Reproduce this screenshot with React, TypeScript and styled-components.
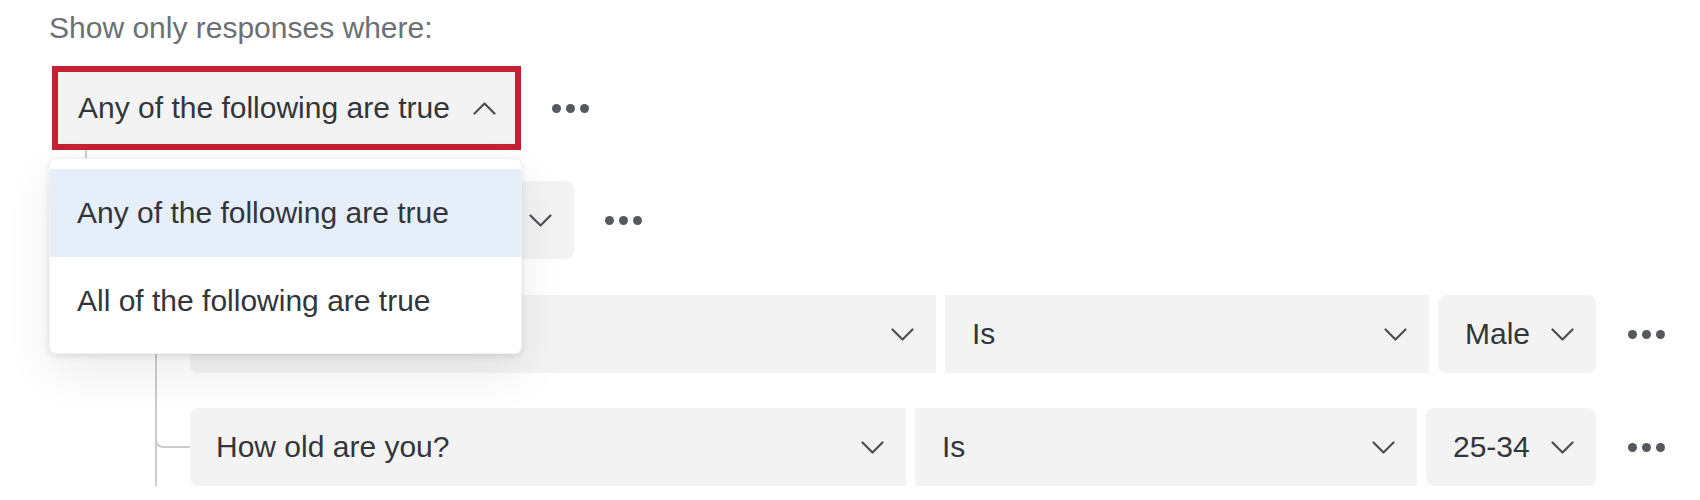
import React from "react";
import styled, { createGlobalStyle, css } from "styled-components";

const GlobalStyle = createGlobalStyle`
  html, body {
    margin: 0;
    padding: 0;
    background: #ffffff;
    overflow: hidden;
  }
  body {
    font-family: "Liberation Sans", Arial, sans-serif;
    color: #32363a;
  }
`;

const Page = styled.div`
  padding: 10px 0 0 52px;
  font-size: 30px;
`;

const Title = styled.div`
  margin-left: -3px;
  line-height: 36px;
  color: #6c6f73;
  margin-bottom: 20px;
`;

const Group = styled.div`
  position: relative;
  display: flex;
  flex-direction: column;
`;

const HeaderRow = styled.div`
  display: flex;
  align-items: center;
  gap: 31px;
`;

const Select = styled.div<{ $w?: number; $radius?: string; $active?: boolean }>`
  display: flex;
  align-items: center;
  justify-content: space-between;
  box-sizing: border-box;
  flex: none;
  height: 78px;
  width: ${(p) => (p.$w ? `${p.$w}px` : "auto")};
  padding: 0 22px 0 26px;
  background: #f3f3f3;
  border-radius: ${(p) => p.$radius ?? "8px"};
  color: #32363a;
  white-space: nowrap;
  overflow: hidden;
  ${(p) =>
    p.$active &&
    css`
      height: 84px;
      border: 6px solid #c42133;
      padding: 0 19px 0 20px;
    `}
`;

const ValueSelect = styled(Select)`
  justify-content: flex-start;
  gap: 21px;
  padding: 0 22px 0 27px;
`;

const Label = styled.span`
  line-height: 36px;
`;

const Dots = styled.div<{ $ml?: number }>`
  display: flex;
  gap: 5px;
  flex: none;
  margin-left: ${(p) => p.$ml ?? 0}px;
`;

const Dot = styled.span`
  width: 9px;
  height: 9px;
  border-radius: 50%;
  background: #55585d;
`;

const Children = styled.div<{
  $indent: number;
  $line: number;
  $padTop: number;
  $continues?: boolean;
}>`
  position: relative;
  display: flex;
  flex-direction: column;
  gap: 35px;
  padding: ${(p) => p.$padTop}px 0 0 ${(p) => p.$indent}px;
  ${(p) =>
    p.$continues &&
    css`
      &::before {
        content: "";
        position: absolute;
        left: ${p.$line}px;
        top: 0;
        bottom: -60px;
        border-left: 2px solid #cbcbcb;
      }
    `}
`;

const Branch = styled.div<{ $reach: number; $offset: number }>`
  position: relative;
  &::before {
    content: "";
    position: absolute;
    left: -${(p) => p.$offset}px;
    top: -${(p) => p.$reach}px;
    width: ${(p) => p.$offset}px;
    height: calc(${(p) => p.$reach}px + 50% + 1px);
    box-sizing: border-box;
    border-left: 2px solid #cbcbcb;
    border-bottom: 2px solid #cbcbcb;
    border-bottom-left-radius: 8px;
  }
`;

const ConditionRow = styled.div`
  display: flex;
  align-items: center;
  gap: 9px;
`;

const Menu = styled.div`
  position: absolute;
  z-index: 10;
  top: 92px;
  left: -3px;
  width: 473px;
  box-sizing: border-box;
  padding: 10px 0 8px;
  background: #ffffff;
  border-radius: 7px;
  border: 1px solid rgba(0, 0, 0, 0.05);
  box-shadow: 0 18px 48px rgba(0, 0, 0, 0.08), 0 2px 6px rgba(0, 0, 0, 0.1);
`;

const MenuItem = styled.div<{ $selected?: boolean }>`
  display: flex;
  align-items: center;
  height: 88px;
  padding-left: 27px;
  background: ${(p) => (p.$selected ? "#e6eef9" : "transparent")};
  color: #32363a;
  white-space: nowrap;
`;

function Chevron({ up }: { up?: boolean }) {
  return (
    <svg width="23" height="13" viewBox="0 0 23 13" style={{ flex: "none" }}>
      <polyline
        points={up ? "1.5,11.5 11.5,1.5 21.5,11.5" : "1.5,1.5 11.5,11.5 21.5,1.5"}
        fill="none"
        stroke="#4b4f54"
        strokeWidth="2.2"
        strokeLinecap="round"
        strokeLinejoin="round"
      />
    </svg>
  );
}

function More({ ml }: { ml?: number }) {
  return (
    <Dots $ml={ml}>
      <Dot />
      <Dot />
      <Dot />
    </Dots>
  );
}

type Condition = {
  field: string;
  fieldW: number;
  op: string;
  opW: number;
  value: string;
};

const conditions: Condition[] = [
  { field: "Gender", fieldW: 746, op: "Is", opW: 484, value: "Male" },
  { field: "How old are you?", fieldW: 716, op: "Is", opW: 502, value: "25-34" },
];

export default function App() {
  return (
    <>
      <GlobalStyle />
      <Page>
        <Title>Show only responses where:</Title>
        <Group>
          <HeaderRow>
            <Select $w={469} $radius="0" $active>
              <Label>Any of the following are true</Label>
              <Chevron up />
            </Select>
            <More />
          </HeaderRow>
          <Children $indent={70} $line={33} $padTop={31}>
            <Branch $reach={31} $offset={37}>
              <Group>
                <HeaderRow>
                  <Select $w={452}>
                    <Label>All of the following are true</Label>
                    <Chevron />
                  </Select>
                  <More />
                </HeaderRow>
                <Children $indent={68} $line={33} $padTop={36} $continues>
                  {conditions.map((c) => (
                    <Branch key={c.field} $reach={36} $offset={35}>
                      <ConditionRow>
                        <Select $w={c.fieldW} $radius="8px 0 0 8px">
                          <Label>{c.field}</Label>
                          <Chevron />
                        </Select>
                        <Select $w={c.opW} $radius="0" style={{ paddingLeft: 27 }}>
                          <Label>{c.op}</Label>
                          <Chevron />
                        </Select>
                        <ValueSelect>
                          <Label>{c.value}</Label>
                          <Chevron />
                        </ValueSelect>
                        <More ml={23} />
                      </ConditionRow>
                    </Branch>
                  ))}
                </Children>
              </Group>
            </Branch>
          </Children>
          <Menu>
            <MenuItem $selected>Any of the following are true</MenuItem>
            <MenuItem>All of the following are true</MenuItem>
          </Menu>
        </Group>
      </Page>
    </>
  );
}
